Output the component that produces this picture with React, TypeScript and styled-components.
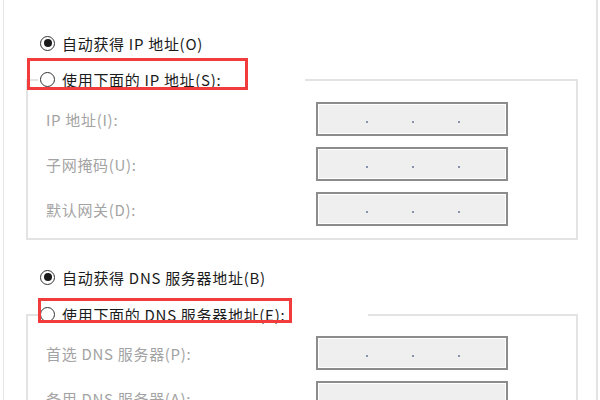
import React from "react";
import styled, { createGlobalStyle } from "styled-components";

const Global = createGlobalStyle`
  html, body { margin: 0; padding: 0; background: #ffffff; }
  * { box-sizing: border-box; }
`;

const Page = styled.div`
  width: 600px;
  height: 400px;
  overflow: hidden;
  background: #ffffff;
  font-family: "Microsoft YaHei", "Noto Sans CJK SC", sans-serif;
  font-size: 15px;
  letter-spacing: 0.7px;
  color: #1b1b1b;
`;

const Frame = styled.div`
  margin-left: 3px;
  width: 595px;
  min-height: 400px;
  border-left: 1px solid #e4e4e4;
  border-right: 2px solid #e4e4e4;
  padding: 33px 18px 0 22px;
  display: flex;
  flex-direction: column;
`;

const RadioRow = styled.label<{ $top?: number }>`
  display: flex;
  align-items: center;
  gap: 7px;
  height: 20px;
  margin-left: 14px;
  margin-top: ${(p) => p.$top ?? 0}px;
  white-space: nowrap;
`;

const Radio = styled.span<{ $checked?: boolean }>`
  width: 15px;
  height: 15px;
  flex: none;
  border-radius: 50%;
  border: 1.5px solid #333333;
  background: #ffffff;
  display: flex;
  align-items: center;
  justify-content: center;
  &::after {
    content: "";
    width: 8px;
    height: 8px;
    border-radius: 50%;
    background: ${(p) => (p.$checked ? "#1a1a1a" : "transparent")};
  }
`;

const Group = styled.div<{ $top: number }>`
  margin-top: ${(p) => p.$top}px;
  display: flex;
  flex-direction: column;
`;

const GroupHeader = styled.div`
  display: flex;
  height: 20px;
`;

const EdgeLeft = styled.div`
  align-self: flex-end;
  width: 12px;
  height: 10px;
  border-top: 2px solid #e3e3e3;
  border-left: 2px solid #e3e3e3;
`;

const EdgeRight = styled.div`
  align-self: flex-end;
  flex: 1;
  height: 10px;
  border-top: 2px solid #e3e3e3;
  border-right: 2px solid #e3e3e3;
`;

const Legend = styled.div<{
  $width: number;
  $box: [number, number, number, number];
}>`
  position: relative;
  width: ${(p) => p.$width}px;
  display: flex;
  align-items: center;
  gap: 7px;
  padding-left: 2px;
  white-space: nowrap;
  &::after {
    content: "";
    position: absolute;
    top: ${(p) => p.$box[0]}px;
    right: ${(p) => p.$box[1]}px;
    bottom: ${(p) => p.$box[2]}px;
    left: ${(p) => p.$box[3]}px;
    border: 3px solid #f23b3b;
    pointer-events: none;
  }
`;

const GroupBody = styled.div<{ $padTop: number }>`
  border: 2px solid #e3e3e3;
  border-top: none;
  padding: ${(p) => p.$padTop}px 0 12px 18px;
  display: flex;
  flex-direction: column;
  gap: 11px;
`;

const FieldRow = styled.div`
  display: flex;
  align-items: center;
  height: 34px;
`;

const FieldLabel = styled.span`
  width: 270px;
  flex: none;
  color: #a3a3a3;
  white-space: nowrap;
`;

const IpBox = styled.div`
  width: 192px;
  height: 34px;
  flex: none;
  background: #efefef;
  border: 2px solid #8c8c8c;
  box-shadow: inset 0 0 0 1px #ffffff;
  display: flex;
  align-items: center;
  padding: 6px 0 0 48px;
  gap: 44px;
`;

const Dot = styled.span`
  width: 2px;
  height: 2px;
  background: #8794ab;
  flex: none;
`;

const IpField = () => (
  <IpBox>
    <Dot />
    <Dot />
    <Dot />
  </IpBox>
);

const ipFields = ["IP 地址(I):", "子网掩码(U):", "默认网关(D):"];
const dnsFields = ["首选 DNS 服务器(P):", "备用 DNS 服务器(A):"];

export default function App() {
  return (
    <Page>
      <Global />
      <Frame>
        <RadioRow>
          <Radio $checked />
          <span>自动获得 IP 地址(O)</span>
        </RadioRow>

        <Group $top={16}>
          <GroupHeader>
            <EdgeLeft />
            <Legend $width={267} $box={[-11, 57, -1, -11]}>
              <Radio />
              <span>使用下面的 IP 地址(S):</span>
            </Legend>
            <EdgeRight />
          </GroupHeader>
          <GroupBody $padTop={13}>
            {ipFields.map((f) => (
              <FieldRow key={f}>
                <FieldLabel>{f}</FieldLabel>
                <IpField />
              </FieldRow>
            ))}
          </GroupBody>
        </Group>

        <RadioRow $top={27}>
          <Radio $checked />
          <span>自动获得 DNS 服务器地址(B)</span>
        </RadioRow>

        <Group $top={17}>
          <GroupHeader>
            <EdgeLeft />
            <Legend $width={330} $box={[-6, 76, 1, 0]}>
              <Radio />
              <span>使用下面的 DNS 服务器地址(E):</span>
            </Legend>
            <EdgeRight />
          </GroupHeader>
          <GroupBody $padTop={12}>
            {dnsFields.map((f) => (
              <FieldRow key={f}>
                <FieldLabel>{f}</FieldLabel>
                <IpField />
              </FieldRow>
            ))}
          </GroupBody>
        </Group>
      </Frame>
    </Page>
  );
}
